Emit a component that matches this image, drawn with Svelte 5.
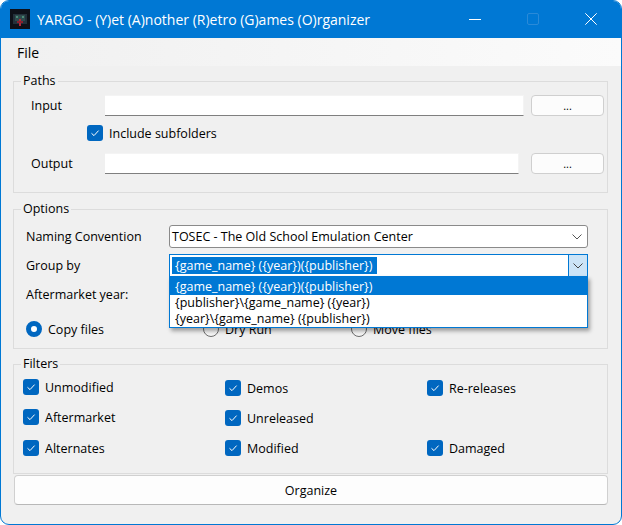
<script>
  const filters = [
    ["Unmodified", "Demos", "Re-releases"],
    ["Aftermarket", "Unreleased", ""],
    ["Alternates", "Modified", "Damaged"]
  ];
  const groupOptions = [
    "{game_name} ({year})({publisher})",
    "{publisher}\\{game_name} ({year})",
    "{year}\\{game_name} ({publisher})"
  ];
</script>

{#snippet check(label, cls = "")}
  <label class="check {cls}">
    <span class="box">
      <svg width="16" height="16" viewBox="0 0 16 16"><path d="M4.5 8.3 L7 10.6 L11.6 5.6" fill="none" stroke="#fff" stroke-width="1"/></svg>
    </span>
    {label}
  </label>
{/snippet}

<div class="window">
  <header class="titlebar">
    <svg class="appicon" width="20" height="20" viewBox="0 0 20 20">
      <rect width="20" height="20" fill="#0e1018"/>
      <rect x="3" y="5" width="14" height="10" fill="#23303a"/>
      <rect x="5" y="6" width="10" height="6" fill="#2f4a4c"/>
      <rect x="6" y="7" width="2" height="2" fill="#4d8a78"/>
      <rect x="12" y="7" width="2" height="2" fill="#4d8a78"/>
      <rect x="9" y="10" width="2" height="7" fill="#b02838"/>
      <rect x="7" y="12" width="6" height="2" fill="#8a2030"/>
    </svg>
    <span class="title">YARGO - (Y)et (A)nother (R)etro (G)ames (O)rganizer</span>
    <div class="caption">
      <svg width="12" height="12" viewBox="0 0 12 12"><path d="M0 6.5H12" stroke="#fff" stroke-width="1"/></svg>
      <svg width="12" height="12" viewBox="0 0 12 12"><rect x=".5" y=".5" width="11" height="11" rx="1.5" fill="none" stroke="#2a8ad8"/></svg>
      <svg width="12" height="12" viewBox="0 0 12 12"><path d="M.3 .3 L11.7 11.7 M11.7 .3 L.3 11.7" stroke="#fff" stroke-width="1"/></svg>
    </div>
  </header>
  <nav class="menubar"><span>File</span></nav>

  <main class="content">
    <fieldset class="paths">
      <legend>Paths</legend>
      <div class="row input-row">
        <span class="path-label">Input</span>
        <div class="textbox"></div>
        <button class="browse">...</button>
      </div>
      <div class="sub">{@render check("Include subfolders")}</div>
      <div class="row output-row">
        <span class="path-label">Output</span>
        <div class="textbox short"></div>
        <button class="browse">...</button>
      </div>
    </fieldset>

    <fieldset class="options">
      <legend>Options</legend>
      <div class="opt-row first">
        <span class="opt-label">Naming Convention</span>
        <div class="combo">
          <span>TOSEC - The Old School Emulation Center</span>
          <svg class="chev" width="10" height="6" viewBox="0 0 10 6"><path d="M.5 .5 L5 5 L9.5 .5" fill="none" stroke="#555"/></svg>
        </div>
      </div>
      <div class="opt-row second">
        <span class="opt-label">Group by</span>
        <div class="combo open">
          <span class="selected">{groupOptions[0]}</span>
          <span class="arrow">
            <svg width="10" height="6" viewBox="0 0 10 6"><path d="M.5 .5 L5 5 L9.5 .5" fill="none" stroke="#444"/></svg>
          </span>
          <ul class="dropdown">
            {#each groupOptions as opt, i}
              <li class:active={i === 0}>{opt}</li>
            {/each}
          </ul>
        </div>
      </div>
      <div class="opt-row third">
        <span class="opt-label">Aftermarket year:</span>
      </div>
      <div class="radios">
        <label class="radio on"><span class="dot"></span>Copy files</label>
        <label class="radio dry"><span class="dot"></span>Dry Run</label>
        <label class="radio move"><span class="dot"></span>Move files</label>
      </div>
    </fieldset>

    <fieldset class="filters">
      <legend>Filters</legend>
      <div class="filter-grid">
        {#each filters as row, r}
          {#each row as name, c}
            {#if name}
              {@render check(name, r === 0 && c === 0 ? "up" : r === 1 && c === 0 ? "up" : "")}
            {:else}
              <span></span>
            {/if}
          {/each}
        {/each}
      </div>
    </fieldset>

    <button class="organize">Organize</button>
  </main>
</div>

<style>
  :global(body) {
    background: #fff;
    font-family: "Open Sans", "Noto Sans", sans-serif;
    font-size: 12.5px;
    color: #000;
  }
  .window {
    width: 622px;
    height: 525px;
    box-sizing: border-box;
    border: 1px solid #0078d4;
    border-radius: 9px;
    background: #f0f0f0;
    overflow: hidden;
    display: flex;
    flex-direction: column;
  }
  .titlebar {
    height: 37px;
    margin: -1px -1px 0;
    background: #0078d4;
    color: #fff;
    display: flex;
    align-items: center;
    padding: 0 25px 0 10px;
    flex: none;
    height: 38px;
  }
  .appicon { margin-right: 7px; }
  .title { font-size: 14px; flex: 1; }
  .caption { display: flex; gap: 46px; padding-bottom: 1px; }
  .menubar {
    height: 28px;
    flex: none;
    background: linear-gradient(90deg, #f0f0f0, #fbfbfb);
    display: flex;
    align-items: center;
    padding-left: 16px;
    font-size: 14px;
  }
  .content { padding: 0 13px 0 12px; position: relative; }
  fieldset {
    margin: 0;
    padding: 0;
    border: 1px solid #dcdcdc;
    box-sizing: border-box;
    min-width: 0;
  }
  legend {
    margin-left: 7px;
    padding: 0 2px;
    line-height: 16px;
  }
  .paths { height: 120px; margin-top: 7px; padding-top: 6px; }
  .row { display: flex; align-items: center; height: 21px; }
  .path-label { width: 74px; margin-left: 17px; }
  .textbox {
    width: 419px;
    height: 21px;
    box-sizing: border-box;
    background: #fff;
    border-bottom: 1px solid #7f7f7f;
    border-top: 1px solid #f4f4f4;
    border-right: 1px solid #f4f4f4;
  }
  .textbox.short { width: 414px; margin-right: 12px; }
  .input-row .textbox { margin-right: 7px; }
  .browse {
    width: 73px;
    height: 21px;
    padding: 0;
    border: 1px solid #cfcfcf;
    border-radius: 4px;
    background: #fcfcfc;
    font: inherit;
    font-size: 11px;
    line-height: 1;
    color: #000;
  }
  .sub { height: 16px; margin: 9px 0 12px 73px; }
  .check {
    display: flex;
    align-items: center;
    gap: 6px;
    height: 16px;
    white-space: nowrap;
  }
  .box {
    width: 16px;
    height: 16px;
    border-radius: 3px;
    background: #0067c0;
    flex: none;
  }
  .box svg { display: block; }

  .options { height: 148px; margin-top: 8px; padding-top: 8px; }
  .opt-row { display: flex; align-items: center; height: 23px; }
  .opt-label { width: 143px; margin-left: 12px; flex: none; }
  .second { margin-top: 6px; }
  .third { margin-top: 6px; }
  .combo {
    position: relative;
    width: 419px;
    height: 23px;
    box-sizing: border-box;
    border: 1px solid #8a8a8a;
    border-radius: 3px;
    background: #fff;
    display: flex;
    align-items: center;
    padding-left: 2px;
  }
  .chev { position: absolute; right: 5px; top: 8px; }
  .combo.open { border-color: #0078d4; border-radius: 0; }
  .selected {
    background: #0078d4;
    color: #fff;
    padding: 0 5px 0 3px;
    line-height: 17px;
  }
  .arrow {
    position: absolute;
    right: -1px;
    top: -1px;
    width: 20px;
    height: 23px;
    box-sizing: border-box;
    background: #cce4f7;
    border: 1px solid #0078d4;
    display: flex;
    align-items: center;
    justify-content: center;
  }
  .dropdown {
    position: absolute;
    left: -1px;
    top: 21px;
    width: 419px;
    box-sizing: border-box;
    margin: 0;
    padding: 0;
    list-style: none;
    background: #fff;
    border: 1px solid #0078d4;
    box-shadow: 2px 3px 4px rgba(0, 0, 0, 0.35);
    z-index: 2;
  }
  .dropdown li { height: 16px; line-height: 16px; padding-left: 5px; }
  .dropdown li.active {
    background: #0078d4;
    color: #fff;
    height: 18px;
    line-height: 19px;
  }
  .radios { position: relative; display: flex; margin-top: 15px; height: 16px; }
  .radio { display: flex; align-items: center; gap: 6px; height: 16px; white-space: nowrap; }
  .radio.on { margin-left: 12px; width: 177px; }
  .radio.dry { width: 148px; }
  .dot {
    width: 16px;
    height: 16px;
    box-sizing: border-box;
    border-radius: 50%;
    border: 1px solid #6d6d6d;
    background: #f5f5f5;
    flex: none;
  }
  .radio.on .dot { border: 5px solid #0067c0; background: #fff; }

  .filters { height: 118px; margin-top: 7px; padding-top: 8px; }
  .filter-grid {
    display: grid;
    grid-template-columns: 202px 202px 1fr;
    grid-auto-rows: 16px;
    row-gap: 14px;
    margin-left: 9px;
  }
  .up { transform: translateY(-1px); }

  .organize {
    display: block;
    width: 594px;
    height: 30px;
    margin: 1px 0 0 1px;
    padding: 0;
    border: 1px solid #d0d0d0;
    border-bottom-color: #b8b8b8;
    border-radius: 4px;
    background: #fdfdfd;
    font: inherit;
    color: #000;
  }
</style>
